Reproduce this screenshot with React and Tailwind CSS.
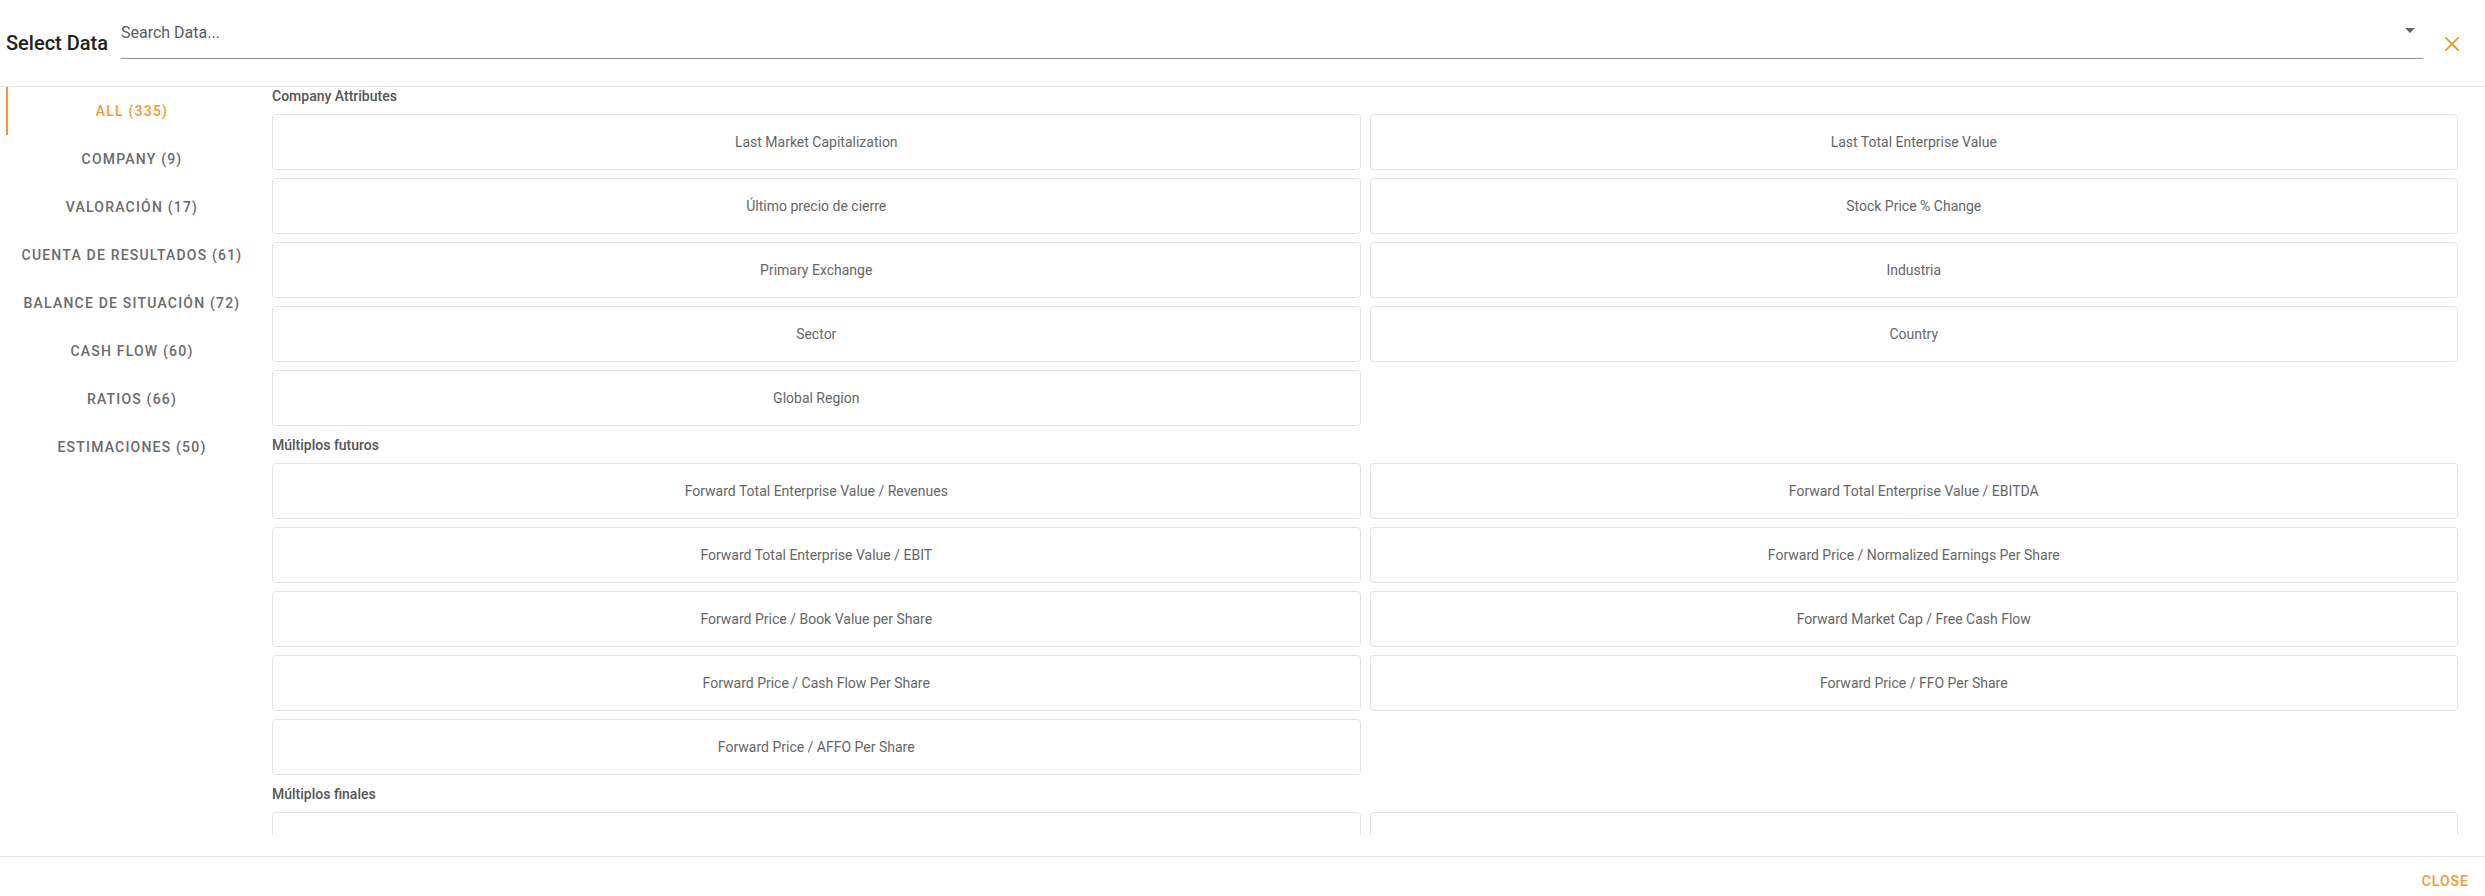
import React, { useState } from 'react';

const ORANGE = 'text-[#f7982f]';

const tabs = [
    { id: 'all', label: 'ALL (335)' },
    { id: 'company', label: 'COMPANY (9)' },
    { id: 'valoracion', label: 'VALORACIÓN (17)' },
    { id: 'cuenta', label: 'CUENTA DE RESULTADOS (61)' },
    { id: 'balance', label: 'BALANCE DE SITUACIÓN (72)' },
    { id: 'cash', label: 'CASH FLOW (60)' },
    { id: 'ratios', label: 'RATIOS (66)' },
    { id: 'estimaciones', label: 'ESTIMACIONES (50)' },
];

const sections = [
    {
        title: 'Company Attributes',
        items: [
            'Last Market Capitalization',
            'Last Total Enterprise Value',
            'Último precio de cierre',
            'Stock Price % Change',
            'Primary Exchange',
            'Industria',
            'Sector',
            'Country',
            'Global Region',
        ],
    },
    {
        title: 'Múltiplos futuros',
        items: [
            'Forward Total Enterprise Value / Revenues',
            'Forward Total Enterprise Value / EBITDA',
            'Forward Total Enterprise Value / EBIT',
            'Forward Price / Normalized Earnings Per Share',
            'Forward Price / Book Value per Share',
            'Forward Market Cap / Free Cash Flow',
            'Forward Price / Cash Flow Per Share',
            'Forward Price / FFO Per Share',
            'Forward Price / AFFO Per Share',
        ],
    },
    {
        // rest of this section is below the fold
        title: 'Múltiplos finales',
        items: ['', ''],
    },
];

const CloseIcon = () => (
    <svg width="14" height="14" viewBox="0 0 14 14" fill="none">
        <path d="M1 1L13 13M13 1L1 13" stroke="#f7982f" strokeWidth="1.8" strokeLinecap="square" />
    </svg>
);

const DataCard = ({ label }) => (
    <button className="h-[56px] w-full rounded-[4px] border border-[#e3e3e3] bg-white text-[14px] text-[#666] flex items-center justify-center">
        {label}
    </button>
);

const App = () => {
    const [active, setActive] = useState('all');

    return (
        <div className="h-[896px] w-full bg-white flex flex-col overflow-hidden font-['Roboto',sans-serif]">
            {/* header */}
            <div className="h-[87px] border-b border-[#e4e4e4] flex items-center pl-[6px] pr-[26px] shrink-0">
                <h2 className="text-[20px] font-medium text-[#222] leading-none">Select Data</h2>
                <div className="relative self-start mt-[16px] ml-[13px] flex-1 h-[43px] border-b border-[#8f8f8f]">
                    <input
                        type="text"
                        placeholder="Search Data..."
                        className="w-full pt-[7px] text-[16px] leading-[19px] text-[#555] placeholder:text-[#5c5c5c] outline-none bg-transparent"
                    />
                    <svg className="absolute right-[8px] top-[12px]" width="10" height="5" viewBox="0 0 10 5">
                        <path d="M0 0L10 0L5 5Z" fill="#666" />
                    </svg>
                </div>
                <button className="ml-[22px] mt-[2px] flex items-center justify-center">
                    <CloseIcon />
                </button>
            </div>

            {/* body */}
            <div className="h-[769px] flex pl-[6px] shrink-0">
                <div className="w-[252px] shrink-0 flex flex-col">
                    {tabs.map(tab => (
                        <button
                            key={tab.id}
                            onClick={() => setActive(tab.id)}
                            className={`relative h-[48px] flex items-center justify-center text-[14px] font-medium tracking-[1.2px] ${active === tab.id ? ORANGE : 'text-[#6b6b6b]'}`}
                        >
                            {active === tab.id && <span className="absolute left-0 top-0 bottom-0 w-[2px] bg-[#f7982f]" />}
                            {tab.label}
                        </button>
                    ))}
                </div>
                <div className="flex-1 ml-[14px] pr-[27px] h-[748px] overflow-hidden">
                    {sections.map((section, i) => (
                        <div key={section.title} className={i > 0 ? 'mt-[10px]' : ''}>
                            <div className="text-[14px] leading-[18px] font-medium text-[#555]">{section.title}</div>
                            <div className="mt-[9px] grid grid-cols-2 gap-x-[9px] gap-y-[8px]">
                                {section.items.map((item, j) => (
                                    <DataCard key={item + j} label={item} />
                                ))}
                            </div>
                        </div>
                    ))}
                </div>
            </div>

            {/* footer */}
            <div className="h-[40px] border-t border-[#e4e4e4] flex items-center justify-end pr-[16px] pt-[9px] shrink-0">
                <button className={`text-[14px] font-medium tracking-[1px] ${ORANGE}`}>CLOSE</button>
            </div>
        </div>
    );
};

export default App;
